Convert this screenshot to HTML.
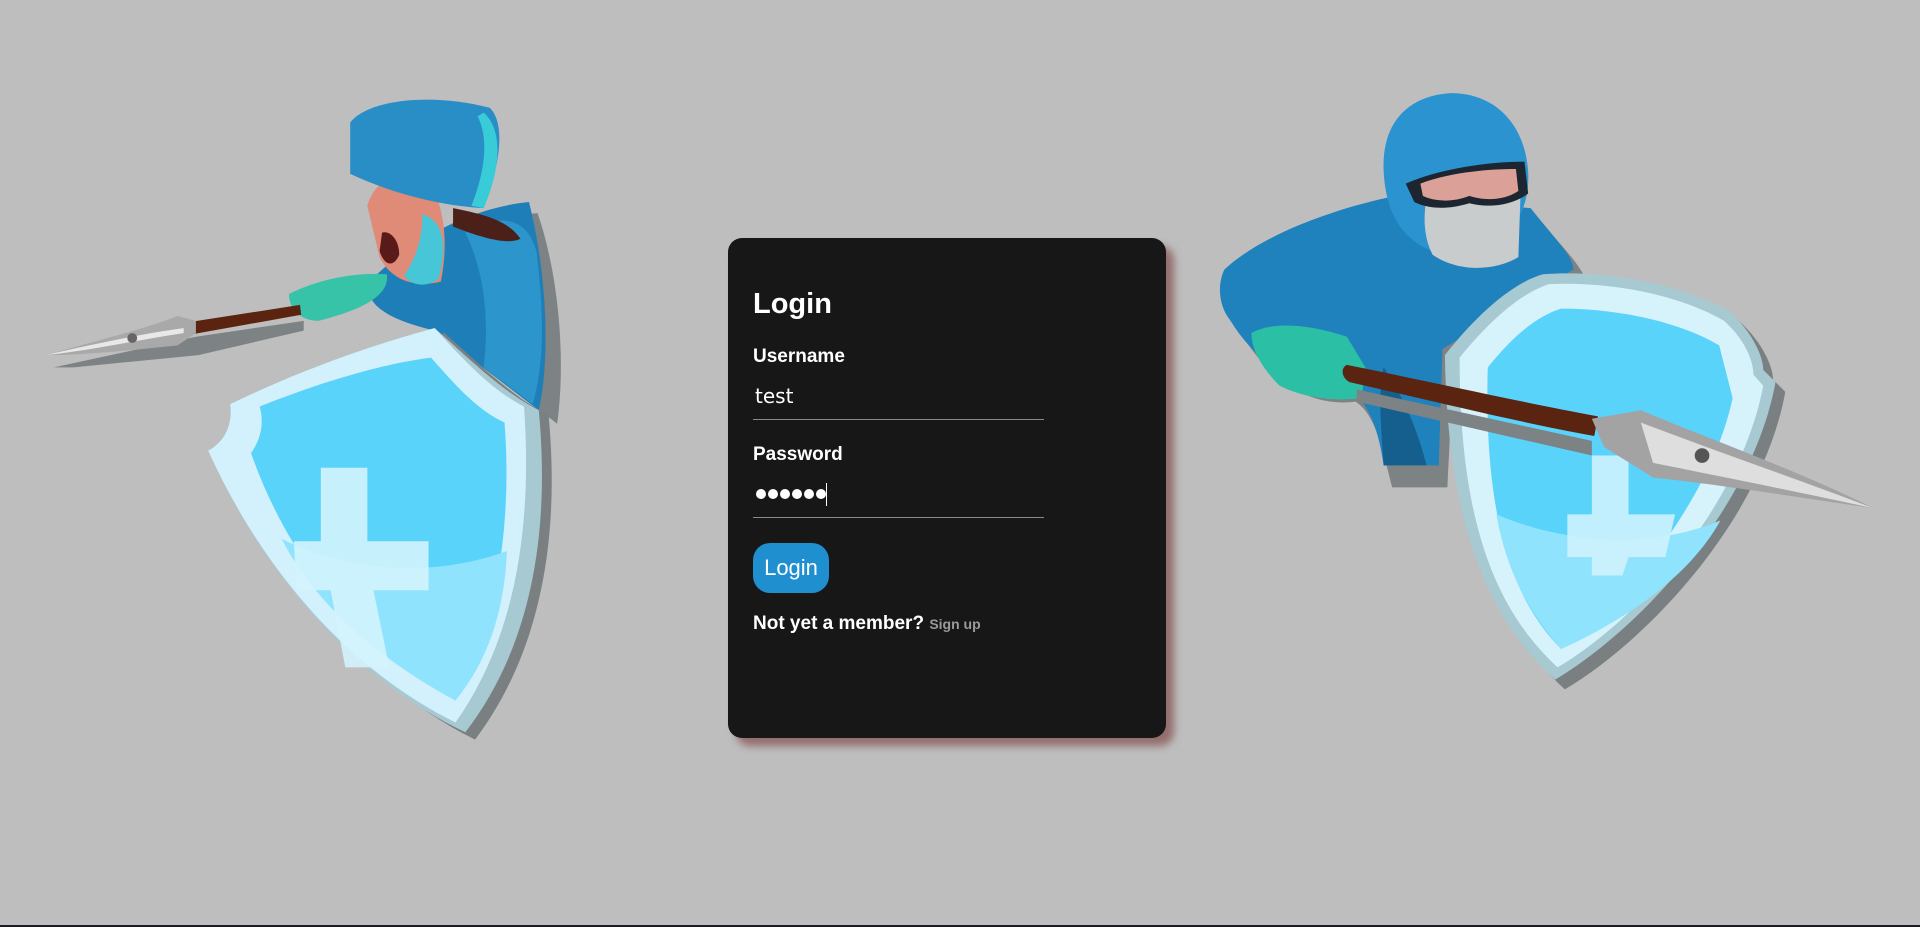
<!DOCTYPE html>
<html><head><meta charset="utf-8"><style>
html,body{margin:0;padding:0}
body{width:1920px;height:927px;background:#bebebe;position:relative;overflow:hidden;font-family:"Liberation Sans",Arial,sans-serif}
svg.art{position:absolute;left:0;top:0;width:1920px;height:927px}
.card{position:absolute;left:728px;top:238px;width:438px;height:500px;background:#171717;border-radius:14px;box-shadow:8px 8px 8px rgba(140,95,95,.85);box-sizing:border-box;padding:0 0 0 25px;color:#fff}
h1{position:absolute;left:25px;top:49px;margin:0;font-size:29px;font-weight:bold;line-height:34px}
.lbl{position:absolute;left:25px;font-size:19px;font-weight:bold;line-height:22px}
.val{position:absolute;left:27px;font-size:20px;line-height:24px;font-family:"DejaVu Sans","Liberation Sans",sans-serif}
.line{position:absolute;left:25px;width:291px;height:1px;background:#8a8a8a}
.btn{position:absolute;left:25px;top:305px;width:76px;height:50px;border-radius:17px;background:#1f8fd0;color:#fff;font-size:22px;line-height:50px;text-align:center}
.nm{position:absolute;left:25px;top:374px;font-size:19px;font-weight:bold;line-height:24px}
.nm span{font-size:14px;color:#9a9a9a}
.bar{position:absolute;left:0;bottom:0;width:1920px;height:2px;background:#1b1b26}
.dots{position:absolute;left:28px;top:244px;height:24px;width:200px;white-space:nowrap;line-height:24px;font-size:0}
.dots i{display:inline-block;width:10px;height:10px;border-radius:50%;background:#fff;margin-right:2px;vertical-align:middle}
.dots b{display:inline-block;width:1px;height:23px;background:#fff;vertical-align:middle;margin-left:-2px}
</style></head><body>
<svg class="art" viewBox="0 0 1568 757" preserveAspectRatio="none">
<g>
<path d="M310,232 C335,200 380,172 432,168 C450,220 455,290 448,340 L360,272 Z" fill="#7d8284" transform="translate(7,6)"/>
<path d="M300,232 C330,200 380,170 432,165 C446,220 450,290 440,335 L355,270 C322,262 300,252 300,232Z" fill="#1e7fb8"/>
<path d="M380,190 C405,175 430,175 438,205 C445,260 444,300 435,330 L395,300 C400,260 395,220 380,190Z" fill="#2b95cc"/>
<path d="M300,168 C305,150 320,140 345,138 C360,160 368,190 360,230 C340,235 320,230 310,210 Z" fill="#e08a78"/>
<path d="M345,175 C362,180 366,200 358,228 C345,236 335,232 330,225 C340,210 345,195 345,175Z" fill="#46c6d6"/>
<path d="M312,190 C318,188 326,195 326,208 C322,218 314,218 310,205Z" fill="#5a1a1a"/>
<path d="M370,170 C395,175 415,180 425,195 C415,200 395,195 370,185Z" fill="#4a2018"/>
<path d="M286,100 C300,82 350,75 400,88 C412,100 410,130 395,170 C360,168 320,158 286,142 Z" fill="#2a8ec6"/>
<path d="M395,92 C410,105 410,135 395,170 L385,168 C398,135 398,110 390,95Z" fill="#38cbd8"/>
<path d="M236,240 C260,228 290,222 316,224 C318,240 300,252 260,262 C245,262 236,252 236,240Z" fill="#36c3a8"/>
<path d="M44,300 L160,275 L248,262 L248,270 L162,290 L60,300 Z" fill="#7d8284"/>
<path d="M155,263 L245,249 L246,257 L157,273 Z" fill="#5a2410"/>
<path d="M37,290 C80,278 120,268 145,258 L160,262 L160,272 L145,282 C115,285 75,290 37,290Z" fill="#a9a9a9"/>
<path d="M37,290 C80,280 120,272 150,268 L150,272 C110,278 75,286 37,290Z" fill="#e8e8e8"/>
<circle cx="108" cy="276" r="4" fill="#666"/>
<path d="M178,372 C193,364 198,349 196,334 C258,304 318,284 363,272 C388,294 418,324 448,339 C456,424 448,524 388,604 C308,564 228,484 178,372Z" fill="#7a8082"/>
<path d="M170,368 C185,360 190,345 188,330 C250,300 310,280 355,268 C380,290 410,320 440,335 C448,420 440,520 380,598 C300,560 220,480 170,368Z" fill="#a7c9d2"/>
<path d="M170,368 C185,360 190,345 188,330 C250,300 310,280 355,268 C375,290 400,318 428,332 C434,420 425,515 372,590 C295,552 220,478 170,368Z" fill="#d2f1fc"/>
<path d="M205,370 C215,356 215,342 212,332 C262,312 312,297 352,292 C370,312 388,334 412,345 C418,420 408,508 372,572 C308,538 240,470 205,370Z" fill="#5ad3fb"/>
<path d="M230,440 C290,470 360,470 414,450 C412,500 398,540 372,572 C308,538 255,490 230,440Z" fill="#8fe3fc"/>
<path d="M262,382 L300,382 L300,442 L350,442 L350,482 L305,482 L318,545 L282,545 L270,482 L242,482 L240,442 L262,442Z" fill="#d3f3fd" opacity=".9"/>
</g>
<g>
<path d="M1005,235 C1040,195 1090,172 1140,162 L1250,172 C1275,200 1290,215 1290,230 L1180,290 L1175,390 L1130,390 C1120,350 1115,330 1100,320 C1060,325 1030,300 1010,270Z" fill="#7d8284" transform="translate(7,8)"/>
<path d="M1000,220 C1030,192 1090,170 1140,160 L1250,170 C1270,195 1285,210 1285,220 L1178,285 L1175,380 L1130,380 C1125,345 1115,325 1100,318 C1060,320 1025,295 1005,262 C995,250 994,232 1000,220Z" fill="#1f82bd"/>
<path d="M1130,300 C1150,330 1160,360 1165,380 L1130,380 C1128,350 1125,320 1130,300Z" fill="#155f8e"/>
<path d="M1130,140 C1128,100 1150,78 1185,76 C1220,76 1245,100 1248,140 C1250,175 1230,205 1190,210 C1150,205 1132,180 1130,140Z" fill="#2b93cf"/>
<path d="M1165,162 C1180,152 1215,148 1242,152 L1240,210 C1220,222 1190,222 1170,208 C1163,195 1162,178 1165,162Z" fill="#c9cccd"/>
<path d="M1148,150 C1175,138 1215,132 1245,132 L1248,158 C1235,168 1215,170 1200,166 C1180,172 1165,170 1155,165Z" fill="#1d2630"/>
<path d="M1160,150 C1180,142 1210,138 1238,138 L1240,156 C1228,164 1212,164 1200,160 C1185,166 1170,164 1162,160Z" fill="#dba198"/>
<path d="M1022,272 C1040,262 1070,265 1100,275 L1115,300 L1112,325 C1090,328 1065,325 1045,315 C1030,300 1022,285 1022,272Z" fill="#2bc0a6"/>
<path d="M1188,298 C1210,270 1240,240 1268,232 C1320,228 1380,240 1420,262 C1440,280 1448,300 1448,310 L1458,320 C1440,420 1350,520 1278,563 C1220,510 1190,430 1188,298Z" fill="#7a8082"/>
<path d="M1180,290 C1202,262 1232,232 1260,224 C1312,220 1372,232 1412,254 C1432,272 1440,292 1440,302 L1450,312 C1432,412 1342,512 1270,555 C1212,502 1182,422 1180,290Z" fill="#a7c9d2"/>
<path d="M1192,292 C1214,265 1240,240 1265,232 C1315,230 1370,240 1408,262 C1426,278 1432,296 1432,306 L1440,315 C1422,410 1340,505 1272,545 C1218,495 1192,420 1192,292Z" fill="#d6f3fc"/>
<path d="M1215,300 C1235,275 1255,258 1275,252 C1320,252 1370,262 1404,282 L1415,325 C1398,405 1330,490 1275,530 C1230,485 1212,410 1215,300Z" fill="#5ad3fb"/>
<path d="M1222,420 C1280,445 1350,448 1405,425 C1380,470 1330,505 1275,530 C1248,500 1230,465 1222,420Z" fill="#8fe3fc"/>
<path d="M1300,372 L1330,372 L1330,420 L1368,420 L1360,455 L1330,455 L1325,470 L1300,470 L1300,455 L1280,455 L1280,420 L1300,420Z" fill="#d3f3fd" opacity=".85"/>
<path d="M1108,308 L1300,350 L1300,362 L1108,318Z" fill="#7d8284" transform="translate(0,10)"/>
<path d="M1100,298 C1160,310 1240,328 1305,340 L1302,356 C1240,345 1160,325 1102,312 C1095,308 1095,300 1100,298Z" fill="#5a2410"/>
<path d="M1300,342 L1340,335 C1400,360 1470,385 1530,415 C1460,405 1400,395 1350,390 L1310,365 Z" fill="#a3a3a3"/>
<path d="M1340,345 C1400,368 1470,392 1530,415 C1460,400 1400,388 1350,378Z" fill="#ececec" opacity=".8"/>
<circle cx="1390" cy="372" r="6" fill="#555"/>
</g>
</svg>
<div class="card">
<h1>Login</h1>
<div class="lbl" style="top:108px">Username</div>
<div class="val" style="top:146px">test</div>
<div class="line" style="top:181px"></div>
<div class="lbl" style="top:206px">Password</div>
<div class="dots"><i></i><i></i><i></i><i></i><i></i><i></i><b></b></div>
<div class="line" style="top:279px"></div>
<div class="btn">Login</div>
<div class="nm">Not yet a member? <span>Sign up</span></div>
</div>
<div class="bar"></div>
</body></html>
